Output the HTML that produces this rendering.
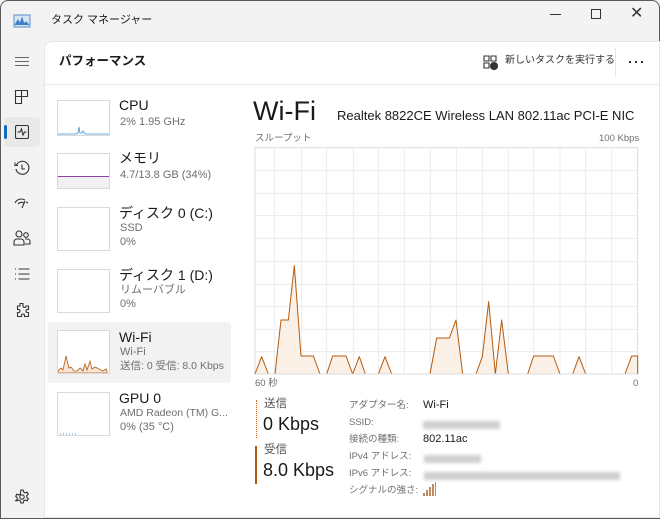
<!DOCTYPE html>
<html><head><meta charset="utf-8">
<style>
*{margin:0;padding:0;box-sizing:border-box}
body{width:660px;height:519px;overflow:hidden;background:#f3f3f3;font-family:"Liberation Sans","Noto Sans CJK JP",sans-serif;color:#1a1a1a;position:relative}
.a{position:absolute;white-space:nowrap;line-height:1.2}
.win{position:absolute;left:0;top:0;width:660px;height:519px;border:1px solid #5a5a5a;border-radius:8px 8px 0 0}
.panel{position:absolute;left:44px;top:41px;width:616px;height:477px;background:#fff;border:1px solid #e5e5e5;border-radius:8px 0 0 0}
.thumb{position:absolute;left:57px;width:53px;border:1px solid #d9d9d9;background:#fff}
.t{font-size:14px;left:119px;color:#1a1a1a}
.s{font-size:11px;left:120px;color:#6e6e6e}
.lab{left:349px;font-size:9.5px;color:#6e6e6e}
.val{left:423px;font-size:11px;color:#1a1a1a}
.blur{position:absolute;height:8px;background:#cfcfcf;filter:blur(1.5px)}
</style></head><body>
<div class="win"></div>
<svg class="a" style="left:13px;top:13px" width="18" height="16" viewBox="0 0 18 16"><rect x="1" y="2" width="16" height="12" fill="#d6e6f5" stroke="#5b8fc7"/><path d="M2 12 L5 7 L7 11 L9 5 L11 11 L13 9 L16 12" fill="#3f7fc9" stroke="#3f7fc9"/></svg>
<div class="a" style="left:51px;top:14px;font-size:11px">タスク マネージャー</div>
<div class="a" style="left:550px;top:14px;width:11px;height:1px;background:#333"></div>
<div class="a" style="left:591px;top:9px;width:10px;height:10px;border:1px solid #333"></div>
<div class="a" style="left:630px;top:4px;font-size:16px;color:#333">✕</div>
<div class="a" style="left:15px;top:57px;width:14px;height:1px;background:#666;box-shadow:0 4px 0 #666,0 8px 0 #666"></div>
<svg class="a" style="left:14px;top:89px" width="16" height="16" viewBox="0 0 16 16" fill="none" stroke="#333" stroke-width="1.1"><path d="M1.5 1.5h12v6h-6v7h-6z M7.5 1.5v6 M1.5 7.5h6"/></svg>
<div class="a" style="left:4px;top:117px;width:36px;height:30px;background:#e9e9e9;border-radius:4px"></div>
<div class="a" style="left:4px;top:125px;width:3px;height:14px;background:#0f6cbd;border-radius:2px"></div>
<svg class="a" style="left:15px;top:125px" width="14" height="14" viewBox="0 0 14 14" fill="none" stroke="#333" stroke-width="1.1"><rect x="0.5" y="0.5" width="13" height="13" rx="1.5"/><path d="M2.5 7h2.5l1.5-3 1.5 6 1.5-3h2"/></svg>
<svg class="a" style="left:14px;top:160px" width="16" height="16" viewBox="0 0 16 16" fill="none" stroke="#333" stroke-width="1.1"><path d="M2.5 5A6.5 6.5 0 1 1 2 9 M1 2.5V5.5h3 M8 4.5V9h3"/></svg>
<svg class="a" style="left:14px;top:196px" width="16" height="14" viewBox="0 0 16 14" fill="none" stroke="#333" stroke-width="1.1"><path d="M1 7c2-4 6-5 10-3 M4 8c2-2 4-2 6-1 M8 12l3-7 M12 6l2 1"/></svg>
<svg class="a" style="left:13px;top:230px" width="18" height="17" viewBox="0 0 18 17" fill="none" stroke="#333" stroke-width="1.1"><circle cx="6" cy="4" r="3"/><circle cx="13" cy="5" r="2.3"/><path d="M1 15v-3a3 3 0 0 1 3-3h4a3 3 0 0 1 3 3v3z M12 9h2.5a2.5 2.5 0 0 1 2.5 2.5V14h-5"/></svg>
<svg class="a" style="left:14px;top:267px" width="16" height="14" viewBox="0 0 16 14" fill="none" stroke="#333" stroke-width="1.1"><path d="M1 2h1 M1 7h1 M1 12h1 M4.5 2h11 M4.5 7h11 M4.5 12h11"/></svg>
<svg class="a" style="left:14px;top:302px" width="16" height="16" viewBox="0 0 16 16" fill="none" stroke="#333" stroke-width="1.1"><path d="M6 1.5h3v2.5a1.5 1.5 0 0 0 3 0V4h2.5v3.5h-1a1.5 1.5 0 0 0 0 3h1v4h-4v-1a1.5 1.5 0 0 0-3 0v1h-4v-4h1a1.5 1.5 0 0 0 0-3h-1v-3.5h2.5z"/></svg>
<svg class="a" style="left:14px;top:489px" width="16" height="16" viewBox="0 0 16 16" fill="none" stroke="#333" stroke-width="1.1"><circle cx="8" cy="8" r="2.2"/><path d="M6.8 1h2.4l.4 2 1.6.9 1.9-.7 1.2 2.1-1.5 1.3v1.8l1.5 1.3-1.2 2.1-1.9-.7-1.6.9-.4 2H6.8l-.4-2-1.6-.9-1.9.7L1.7 11.7 3.2 10.4V8.6L1.7 7.3 2.9 5.2l1.9.7 1.6-.9z"/></svg>
<div class="panel"></div>
<div class="a" style="left:44px;top:84px;width:616px;height:1px;background:#e8e8e8"></div>
<div class="a" style="left:59px;top:54px;font-size:12.5px;font-weight:bold">パフォーマンス</div>
<svg class="a" style="left:483px;top:55px" width="15" height="15" viewBox="0 0 15 15" fill="none" stroke="#333" stroke-width="1.1"><path d="M1 1h5v5H1z M1 8h5v5H1z M8 1h5v5H8z"/><circle cx="11" cy="11" r="3.5" fill="#333"/></svg>
<div class="a" style="left:505px;top:55px;font-size:10px;color:#333">新しいタスクを実行する</div>
<div class="a" style="left:615px;top:48px;width:1px;height:28px;background:#e5e5e5"></div>
<div class="a" style="left:629px;top:61px;width:2px;height:2px;background:#333;box-shadow:6px 0 0 #333,12px 0 0 #333"></div>
<div class="a" style="left:48px;top:322px;width:183px;height:61px;background:#f2f2f2;border-radius:3px"></div>
<div class="thumb" style="top:100px;height:36px"><svg width="51" height="34"><path d="M0 33h18l2-1 1-6 1 6h2l1-2 2 3h24" fill="none" stroke="#3f93d6" stroke-width="0.8"/></svg></div>
<div class="a t" style="top:97px">CPU</div><div class="a s" style="top:116px">2% 1.95 GHz</div>
<div class="thumb" style="top:153px;height:36px"><div style="position:absolute;left:0;right:0;bottom:0;height:12px;background:#f2f0f3;border-top:1px solid #8c3da8"></div></div>
<div class="a t" style="top:150px">メモリ</div><div class="a s" style="top:169px">4.7/13.8 GB (34%)</div>
<div class="thumb" style="top:207px;height:44px"></div>
<div class="a t" style="top:205px">ディスク 0 (C:)</div><div class="a s" style="top:222px">SSD</div><div class="a s" style="top:236px">0%</div>
<div class="thumb" style="top:269px;height:44px"></div>
<div class="a t" style="top:267px">ディスク 1 (D:)</div><div class="a s" style="top:284px">リムーバブル</div><div class="a s" style="top:298px">0%</div>
<div class="thumb" style="top:330px;height:44px"><svg width="51" height="42" viewBox="0 0 51 42"><path d="M0 42V40l3-3 2 2 3-14 3 12 2-1 3 4 3 0 3-3 3 3 2-7 2 6 3-9 2 8 3-2 4 2 4 2 3-2 1 2V42z" fill="#f7e6d8" stroke="#b35a0e" stroke-width="0.8"/></svg></div>
<div class="a t" style="top:329px">Wi-Fi</div><div class="a s" style="top:346px">Wi-Fi</div><div class="a s" style="top:360px;font-size:10.5px">送信: 0 受信: 8.0 Kbps</div>
<div class="thumb" style="top:392px;height:44px"><svg width="51" height="42"><path d="M2 41h16" stroke="#3f93d6" stroke-dasharray="1 2"/></svg></div>
<div class="a t" style="top:390px">GPU 0</div><div class="a s" style="top:407px;font-size:10.5px">AMD Radeon (TM) G...</div><div class="a s" style="top:421px">0% (35 °C)</div>
<div class="a" style="left:253px;top:95px;font-size:27px">Wi-Fi</div>
<div class="a" style="left:337px;top:108px;font-size:13px">Realtek 8822CE Wireless LAN 802.11ac PCI-E NIC</div>
<div class="a" style="left:255px;top:133px;font-size:9.5px;color:#6e6e6e">スループット</div>
<div class="a" style="left:599px;top:133px;font-size:9.5px;color:#6e6e6e">100 Kbps</div>
<svg class="a" style="left:250px;top:120px" width="410" height="270" viewBox="0 0 1230 810">
<g stroke="#ececec" stroke-width="3" fill="none">
<path d="M73 83V762 M155 83V762 M230 83V762 M310 83V762 M385 83V762 M463 83V762 M541 83V762 M620 83V762 M697 83V762 M775 83V762 M851 83V762 M930 83V762 M1007 83V762 M1085 83V762"/>
<path d="M15 152H1163 M15 220H1163 M15 287H1163 M15 355H1163 M15 425H1163 M15 493H1163 M15 560H1163 M15 628H1163 M15 695H1163"/>
</g>
<rect x="15" y="83" width="1148" height="679" fill="none" stroke="#dcdcdc" stroke-width="3"/>
<path d="M15 762L35 710L55 762L75 762L93 600L115 600L133 437L153 708L190 708L210 762L230 762L248 708L288 708L308 762L328 710L346 762L385 762L405 710L425 762L540 762L560 654L598 654L618 600L638 762L678 762L697 710L716 545L736 762L755 600L775 762L833 762L851 708L910 708L930 762L968 762L987 710L1007 762L1125 762L1145 708L1163 708L1163 762Z" fill="#fbf0e6" stroke="#b35a0e" stroke-width="3" stroke-linejoin="round"/>
<path d="M15 762H1163" stroke="#dcdcdc" stroke-width="3"/>
</svg>
<div class="a" style="left:255px;top:378px;font-size:9.5px;color:#6e6e6e">60 秒</div>
<div class="a" style="left:633px;top:378px;font-size:9.5px;color:#6e6e6e">0</div>
<div class="a" style="left:256px;top:400px;height:38px;border-left:1.5px dotted #d9661a"></div>
<div class="a" style="left:264px;top:398px;font-size:11.5px;color:#555">送信</div>
<div class="a" style="left:263px;top:414px;font-size:18px">0 Kbps</div>
<div class="a" style="left:255px;top:446px;width:2px;height:38px;background:#b35a0e"></div>
<div class="a" style="left:264px;top:444px;font-size:11.5px;color:#555">受信</div>
<div class="a" style="left:263px;top:460px;font-size:18px">8.0 Kbps</div>
<div class="a lab" style="top:400px">アダプター名:</div><div class="a val" style="top:399px">Wi-Fi</div>
<div class="a lab" style="top:417px">SSID:</div><div class="blur" style="left:423px;top:421px;width:77px"></div>
<div class="a lab" style="top:434px">接続の種類:</div><div class="a val" style="top:433px">802.11ac</div>
<div class="a lab" style="top:451px">IPv4 アドレス:</div><div class="blur" style="left:424px;top:455px;width:57px"></div>
<div class="a lab" style="top:468px">IPv6 アドレス:</div><div class="blur" style="left:424px;top:472px;width:196px"></div>
<div class="a lab" style="top:485px">シグナルの強さ:</div>
<svg class="a" style="left:422px;top:482px" width="15" height="14" viewBox="0 0 15 14"><path d="M1 14V11h2v3z M4 14V8h2v6z M7 14V5h2v9z M10 14V2h2v12z M13 14V0h1v14z" fill="#c08a5a"/></svg>
</body></html>
